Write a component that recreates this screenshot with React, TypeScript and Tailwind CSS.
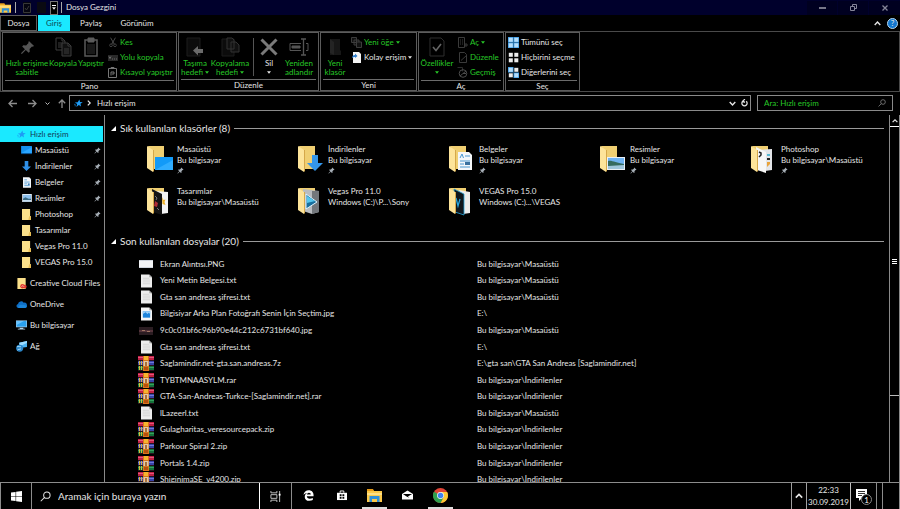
import type { ReactNode } from "react";

const GREEN = "text-[#27c927]";

const PinIcon = ({ className = "" }: { className?: string }) => (
  <svg viewBox="0 0 16 16" className={className} fill="currentColor" aria-hidden="true">
    <path d="M9.500 1l5.500 5.500-1.600.600-.600-.200-2.600 2.600.200 3-1.200 1.200-3-3L2 15l-1-1 4.300-4.200-3-3 1.200-1.200 3 .200L9.100 3.200 8.900 2.600z" />
  </svg>
);

const StarIcon = ({ className = "" }: { className?: string }) => (
  <svg viewBox="0 0 16 16" className={className} aria-hidden="true">
    <path d="M9.500 1l1.300 4.500 4.700.2-4 2.700 1 5.100-3.900-2.700-4.400 3.400 1.500-5.200L1.500 6l5.100-.3z" fill="#1e9bf5" />
    <path d="M0 9.500h3M1 12h2.500" stroke="#1e9bf5" strokeWidth="1" />
  </svg>
);

const Folder = ({ className = "" }: { className?: string }) => (
  <svg viewBox="0 0 10 12" className={className} aria-hidden="true">
    <path d="M0 0h9v8h1v4H0z" fill="#fbe08a" />
    <path d="M8 8h2v4H7z" fill="#e8bd55" />
  </svg>
);

const Monitor = () => (
  <svg viewBox="0 0 12 10" className="h-[9px] w-[11px]" aria-hidden="true">
    <path d="M0 0h12v8H0z" fill="#1491ee" />
    <path d="M0 8L12 1v7z" fill="#2ba6ff" />
    <path d="M0 8h12v1H0z" fill="#0b5fa8" />
  </svg>
);

const DownArrow = () => (
  <svg viewBox="0 0 10 12" className="h-[11px] w-[9px]" aria-hidden="true">
    <path d="M3 0h4v6h3l-5 5-5-5h3z" fill="#2f8fe6" />
  </svg>
);

const DocIcon = () => (
  <svg viewBox="0 0 9 12" className="h-[11px] w-2" aria-hidden="true">
    <path d="M0 0h7l2 2v10H0z" fill="#f2f6fa" />
    <path d="M1.500 3h3M1.500 5.500h6M1.500 7.500h3M1.500 9.500h6" stroke="#58a3da" strokeWidth="1" />
    <path d="M5.500 7h2v2h-2z" fill="#3d7fb8" />
  </svg>
);

const PictureIcon = () => (
  <svg viewBox="0 0 12 10" className="h-2 w-[10px]" aria-hidden="true">
    <path d="M0 0h12v10H0z" fill="#eef3f8" />
    <path d="M1 1h10v8H1z" fill="#8cc0ee" />
    <path d="M1 6l3-2 4 2 3 0v3H1z" fill="#3a6a83" />
    <path d="M1 7.500h10V9H1z" fill="#c3dcf0" />
  </svg>
);

const CreativeIcon = () => (
  <svg viewBox="0 0 10 12" className="h-[11px] w-[10px]" aria-hidden="true">
    <path d="M0 0h9v12H0z" fill="#fbe08a" />
    <circle cx="5.500" cy="9" r="2.400" fill="#e23a2e" />
    <circle cx="8" cy="9.400" r="2" fill="#e23a2e" />
    <path d="M4.500 9.500c.4-1.400 2-1.400 2.700 0" stroke="#fff" strokeWidth=".6" fill="none" />
  </svg>
);

const CloudIcon = () => (
  <svg viewBox="0 0 12 8" className="h-[7px] w-[11px]" aria-hidden="true">
    <path d="M2.500 8A2.400 2.400 0 0 1 2 3.300 3.600 3.600 0 0 1 8.500 2 3 3 0 0 1 10 8z" fill="#0f6fc6" />
    <path d="M2.500 8c-.8-2.200 2-4.700 4.200-3.300 2-1 5.300.6 5.100 2-.2.900-.8 1.300-1.800 1.300z" fill="#1b84d8" />
  </svg>
);

const ComputerIcon = () => (
  <svg viewBox="0 0 12 10" className="h-[10px] w-[11px]" aria-hidden="true">
    <path d="M0 0h12v7.500H0z" fill="#9ccbec" />
    <path d="M.7.700h10.600v6H.7z" fill="#2aa1ef" />
    <path d="M.7.700h8L.7 5z" fill="#68c4ff" />
    <path d="M4 8h4v1H4zM2 9h8v1H2z" fill="#b7d6ea" />
  </svg>
);

const NetworkIcon = () => (
  <svg viewBox="0 0 12 12" className="h-[11px] w-[11px]" aria-hidden="true">
    <path d="M3.500 2L12 0v6.500l-8 1z" fill="#49b1f1" />
    <path d="M3.500 2L12 0v2L4 6z" fill="#9bdbff" />
    <circle cx="4" cy="8" r="3.800" fill="#2a86c9" />
    <path d="M1 6.500c2-1.600 3 .6 4.500-.4M1.500 10c1-1.500 3-.4 4-1.700" stroke="#b8e6ff" fill="none" />
  </svg>
);

const Caret = () => (
  <svg viewBox="0 0 6 4" className="inline-block h-[3px] w-1 shrink-0" fill="currentColor" aria-hidden="true">
    <path d="M0 0h6L3 4z" />
  </svg>
);

const Chevron = ({ d, className = "" }: { d: string; className?: string }) => (
  <svg viewBox="0 0 10 10" className={className} fill="none" stroke="currentColor" strokeWidth="2" aria-hidden="true">
    <path d={d} />
  </svg>
);

const UP = "M1 7l4-4 4 4";
const DOWN = "M1 3l4 4 4-4";

/* ---------- ribbon ---------- */

function Group({ title, className, children }: { title: string; className: string; children: ReactNode }) {
  return (
    <section className={`flex shrink-0 flex-col border border-[#5c5c5c] px-[2px] ${className}`}>
      <div className="flex flex-1 pt-[2px]">{children}</div>
      <h2 className="h-[11px] border-t border-[#6b6b6b] text-center leading-[10px]">{title}</h2>
    </section>
  );
}

function BigButton({
  icon,
  lines,
  caret,
  className = "",
}: {
  icon: ReactNode;
  lines: string[];
  caret?: boolean;
  className?: string;
}) {
  return (
    <button className={`flex shrink-0 flex-col items-center leading-[9px] whitespace-nowrap ${className}`}>
      <span className="flex h-6 items-center justify-center text-[#555]">{icon}</span>
      {lines.map((line, index) => (
        <span key={line} className="flex items-center gap-[2px]">
          {line}
          {caret && index === lines.length - 1 && lines.length > 1 ? <Caret /> : null}
        </span>
      ))}
      {caret && lines.length === 1 ? (
        <span className="flex h-2 items-center">
          <Caret />
        </span>
      ) : null}
    </button>
  );
}

function SmallButton({ icon, label, caret, className = GREEN }: { icon: ReactNode; label: string; caret?: boolean; className?: string }) {
  return (
    <button className={`flex h-[15px] items-center gap-[2px] whitespace-nowrap ${className}`}>
      <span className="flex w-[11px] justify-center text-[#4d4d4d]">{icon}</span>
      {label}
      {caret ? <Caret /> : null}
    </button>
  );
}

const line = { fill: "none", stroke: "currentColor" };

const CopyGlyph = () => (
  <svg viewBox="0 0 17 20" className="h-5 w-[17px] text-[#3c3c3c]" {...line} aria-hidden="true">
    <path d="M1 1h6l3 3v9H1zM7 1v3h3M3 6h5M3 8h5M3 10h5" />
    <path d="M7 6h6l3 3v10H7zM13 6v3h3M9 12h5M9 14h5M9 16h5" fill="#111" />
  </svg>
);

const PasteGlyph = () => (
  <svg viewBox="0 0 14 20" className="h-5 w-[14px] text-[#5a5a5a]" {...line} aria-hidden="true">
    <path d="M1 3h12v16H1z" strokeWidth="1.500" />
    <path d="M4 1h6v4H4z" fill="currentColor" />
    <path d="M3 8h8M3 10h8M3 12h8M3 14h8M3 16h8" stroke="#333" />
  </svg>
);

const CutGlyph = () => (
  <svg viewBox="0 0 10 12" className="h-[11px] w-2" {...line} aria-hidden="true">
    <path d="M2 0l4.500 8M8 0L3.500 8" strokeWidth="1.200" />
    <circle cx="2.500" cy="9.500" r="1.700" />
    <circle cx="7.500" cy="9.500" r="1.700" />
  </svg>
);

const PathGlyph = () => (
  <svg viewBox="0 0 10 6" className="h-[6px] w-[10px]" aria-hidden="true">
    <path d="M0 0h10v6H0z" fill="#2a2a2a" />
    <path d="M1 1.500l1 2 1-2M4 4h1M6 4h1M8 4h1" stroke="#888" strokeWidth=".7" fill="none" />
  </svg>
);

const ShortcutGlyph = () => (
  <svg viewBox="0 0 9 11" className="h-[11px] w-[9px] text-[#777]" {...line} aria-hidden="true">
    <path d="M.5 1.500h8v9h-8zM3 .5h3v1H3z" />
    <path d="M3 8.500V5h3v2H4" />
  </svg>
);

const MoveGlyph = () => (
  <svg viewBox="0 0 18 20" className="h-5 w-[18px]" aria-hidden="true">
    <path d="M1 1h13v18H1z" fill="#0c0c0c" stroke="#1c1c1c" />
    <path d="M7 13.500l5-4.500v3h5v4h-5v2.500z" fill="#6a6a6a" />
  </svg>
);

const CopyToGlyph = () => (
  <svg viewBox="0 0 19 20" className="h-5 w-[19px] text-[#333]" {...line} aria-hidden="true">
    <path d="M1 2h12v17H1z" fill="#0c0c0c" stroke="#1c1c1c" />
    <path d="M6 1h5l2 2v9H6zM10 5h5l3 3v7h-8z" fill="#111" />
  </svg>
);

const CrossGlyph = () => (
  <svg viewBox="0 0 18 18" className="h-[18px] w-[18px] text-[#7a7a7a]" {...line} aria-hidden="true">
    <path d="M1.500 1.500l15 15M16.500 1.500l-15 15" strokeWidth="3" />
  </svg>
);

const RenameGlyph = () => (
  <svg viewBox="0 0 20 18" className="h-[18px] w-5 text-[#555]" {...line} aria-hidden="true">
    <path d="M12 5.500H1v7h11M17 5.500h2v7h-2" />
    <path d="M3 8h8v2H3z" fill="currentColor" />
    <path d="M14.500 1.500v15M12 1h5M12 17h5" strokeWidth="1.300" />
  </svg>
);

const NewFolderGlyph = () => (
  <svg viewBox="0 0 13 18" className="h-[18px] w-[13px]" aria-hidden="true">
    <path d="M1 1h10v11l1 1v4H1z" fill="#171717" />
    <path d="M1 1l4 3v13l-4-2z" fill="#242424" />
  </svg>
);

const NewItemGlyph = () => (
  <svg viewBox="0 0 11 11" className="h-[11px] w-[11px] text-[#3c3c3c]" {...line} aria-hidden="true">
    <path d="M.5.500h5v5h-5zM3 3h5v5H3z" fill="#111" />
    <path d="M5.500 5h5v5.500h-5z" fill="#111" />
  </svg>
);

const EasyAccessGlyph = () => (
  <svg viewBox="0 0 9 11" className="h-[11px] w-[9px]" aria-hidden="true">
    <path d="M1 0h6l2 2v9H1z" fill="#f4f4f4" />
    <path d="M0 6c.3-2 1-3 3-3V1.500L5.500 4 3 6V5C1.500 5 1 5.500 0 6z" fill="#2d7fd0" />
  </svg>
);

const PropertiesGlyph = () => (
  <svg viewBox="0 0 16 20" className="h-5 w-4 text-[#2e2e2e]" {...line} aria-hidden="true">
    <path d="M1 1h11l3 3v15H1z" />
    <path d="M4 10l3 3.500L12 7" stroke="#666" strokeWidth="1.600" />
  </svg>
);

const OpenGlyph = () => (
  <svg viewBox="0 0 10 11" className="h-[11px] w-[10px] text-[#3a3a3a]" {...line} aria-hidden="true">
    <path d="M.5.500h6v10h-6zM2 3h1M2 5h1M2 7h1M4 3h1M4 5h1M4 7h1M6 8h4M8 6v4" />
  </svg>
);

const EditGlyph = () => (
  <svg viewBox="0 0 10 11" className="h-[11px] w-[10px] text-[#3a3a3a]" {...line} aria-hidden="true">
    <path d="M1.500.500h5l2 2v8h-7zM3 8.500L9 3" />
  </svg>
);

const HistoryGlyph = () => (
  <svg viewBox="0 0 11 11" className="h-[11px] w-[11px] text-[#4c4c4c]" {...line} aria-hidden="true">
    <path d="M.5.500h5v4" stroke="#2c2c2c" />
    <circle cx="6" cy="6.500" r="3.800" />
    <path d="M3 9l6-5M6 6.500h3" />
  </svg>
);

function SelectGlyph({ on }: { on: number[] }) {
  return (
    <svg viewBox="0 0 11 11" className="h-[11px] w-[11px]" aria-hidden="true">
      {[0, 1, 2, 3].map((i) => {
        const x = (i % 2) * 5.5;
        const y = Math.floor(i / 2) * 5.5;
        return on.includes(i) ? (
          <g key={i}>
            <rect x={x} y={y} width="5.500" height="5.500" fill="#3f9ee8" />
            <rect x={x + 0.8} y={y + 0.8} width="4" height="4" fill="#b5dcf8" />
          </g>
        ) : (
          <rect key={i} x={x + 0.8} y={y + 0.8} width="4" height="4" fill="#ececec" />
        );
      })}
    </svg>
  );
}

function Ribbon() {
  return (
    <div className="flex h-[61px] shrink-0 gap-px border border-[#4a4a4a] pl-px">
      <Group title="Pano" className="w-[175px]">
        <BigButton className={`w-11 ${GREEN}`} lines={["Hızlı erişime", "sabitle"]} icon={<PinIcon className="h-[15px] w-[15px]" />} />
        <BigButton className={`w-7 ${GREEN}`} lines={["Kopyala"]} icon={<CopyGlyph />} />
        <BigButton className={`w-7 ${GREEN}`} lines={["Yapıştır"]} icon={<PasteGlyph />} />
        <div className="ml-[2px]">
          <SmallButton icon={<CutGlyph />} label="Kes" />
          <SmallButton icon={<PathGlyph />} label="Yolu kopyala" />
          <SmallButton icon={<ShortcutGlyph />} label="Kısayol yapıştır" />
        </div>
      </Group>
      <Group title="Düzenle" className="w-[141px]">
        <BigButton className={`w-7 ${GREEN}`} lines={["Taşıma", "hedefi"]} caret icon={<MoveGlyph />} />
        <BigButton className={`w-[42px] ${GREEN}`} lines={["Kopyalama", "hedefi"]} caret icon={<CopyToGlyph />} />
        <div className="my-[3px] ml-[2px] w-px bg-[#555]" />
        <BigButton className="w-[30px]" lines={["Sil"]} caret icon={<CrossGlyph />} />
        <BigButton className={`w-[30px] ${GREEN}`} lines={["Yeniden", "adlandır"]} icon={<RenameGlyph />} />
      </Group>
      <Group title="Yeni" className="w-[97px]">
        <BigButton className={`w-6 ${GREEN}`} lines={["Yeni", "klasör"]} icon={<NewFolderGlyph />} />
        <div className="ml-1">
          <SmallButton icon={<NewItemGlyph />} label="Yeni öğe" caret />
          <SmallButton icon={<EasyAccessGlyph />} label="Kolay erişim" caret className="" />
        </div>
      </Group>
      <Group title="Aç" className="w-[86px]">
        <BigButton className={`w-8 ${GREEN}`} lines={["Özellikler"]} caret icon={<PropertiesGlyph />} />
        <div className="ml-1">
          <SmallButton icon={<OpenGlyph />} label="Aç" caret />
          <SmallButton icon={<EditGlyph />} label="Düzenle" />
          <SmallButton icon={<HistoryGlyph />} label="Geçmiş" />
        </div>
      </Group>
      <Group title="Seç" className="w-[75px]">
        <div>
          <SmallButton icon={<SelectGlyph on={[0, 1, 2, 3]} />} label="Tümünü seç" className="" />
          <SmallButton icon={<SelectGlyph on={[]} />} label="Hiçbirini seçme" className="" />
          <SmallButton icon={<SelectGlyph on={[0, 3]} />} label="Diğerlerini seç" className="" />
        </div>
      </Group>
    </div>
  );
}

/* ---------- sidebar ---------- */

const pinned = [
  { label: "Masaüstü", icon: <Monitor />, pin: true },
  { label: "İndirilenler", icon: <DownArrow />, pin: true },
  { label: "Belgeler", icon: <DocIcon />, pin: true },
  { label: "Resimler", icon: <PictureIcon />, pin: true },
  { label: "Photoshop", icon: <Folder className="h-[11px] w-[9px]" />, pin: true },
  { label: "Tasarımlar", icon: <Folder className="h-[11px] w-[9px]" />, pin: false },
  { label: "Vegas Pro 11.0", icon: <Folder className="h-[11px] w-[9px]" />, pin: false },
  { label: "VEGAS Pro 15.0", icon: <Folder className="h-[11px] w-[9px]" />, pin: false },
];

const roots = [
  { label: "Creative Cloud Files", icon: <CreativeIcon /> },
  { label: "OneDrive", icon: <CloudIcon /> },
  { label: "Bu bilgisayar", icon: <ComputerIcon /> },
  { label: "Ağ", icon: <NetworkIcon /> },
];

function Sidebar() {
  return (
    <nav className="w-[105px] shrink-0 border-r border-[#8a8a8a] pt-[11px] whitespace-nowrap">
      <a href="#hizli" className="mr-px flex h-4 items-center gap-1 bg-[#1ae9ff] pl-[17px] text-[#123a55]">
        <StarIcon className="h-[9px] w-[9px]" />
        Hızlı erişim
      </a>
      {pinned.map((item) => (
        <a key={item.label} href="#klasor" className="flex h-4 items-center gap-[2px] pr-[3px] pl-5">
          <span className="flex w-[13px] justify-center">{item.icon}</span>
          <span className="flex-1">{item.label}</span>
          {item.pin ? <PinIcon className="h-[7px] w-[7px] text-[#a5adb5]" /> : null}
        </a>
      ))}
      <div className="flex flex-col gap-[5px] pt-[5px]">
        {roots.map((item) => (
          <a key={item.label} href="#kok" className="flex h-4 items-center gap-[2px] pl-[15px]">
            <span className="flex w-[13px] justify-center">{item.icon}</span>
            {item.label}
          </a>
        ))}
      </div>
    </nav>
  );
}

/* ---------- folder tiles ---------- */

function BigFolder({ children }: { children: ReactNode }) {
  return (
    <svg viewBox="0 0 27 30" className="h-[30px] w-[27px] shrink-0" aria-hidden="true">
      <path d="M1 2h16v23H7z" fill="#f0cf72" />
      {children}
      <path d="M0 2l6 4v22l-6-4z" fill="#fde49a" />
      <path d="M6 6v22l1-1V6z" fill="#d5a84a" />
    </svg>
  );
}

const tiles = [
  {
    name: "Masaüstü",
    path: "Bu bilgisayar",
    pin: true,
    art: (
      <>
        <path d="M8 13h18v13H8z" fill="#129af8" />
        <path d="M8 26L26 16v10z" fill="#30adff" />
      </>
    ),
  },
  { name: "İndirilenler", path: "Bu bilgisayar", pin: true, art: <path d="M14 11h6v8h5l-8 8-8-8h5z" fill="#3496ea" /> },
  {
    name: "Belgeler",
    path: "Bu bilgisayar",
    pin: true,
    art: (
      <>
        <path d="M9 8h11l3 3v15H9z" fill="#f4f7fa" />
        <path d="M11 14l2-4 1.500 4M16 12h5M11 17h10M11 20h4M11 23h10" stroke="#4a98d0" fill="none" />
        <path d="M16 18h5v3h-5z" fill="#3a719f" />
      </>
    ),
  },
  {
    name: "Resimler",
    path: "Bu bilgisayar",
    pin: true,
    art: (
      <>
        <path d="M7 13h18v13H7z" fill="#eaf0f6" />
        <path d="M8 14h16v11H8z" fill="#6fb3f2" />
        <path d="M8 17c4-1 8 2 16 3v2H8z" fill="#356b5f" />
        <path d="M8 22l16-1v4H8z" fill="#9fc6dc" />
      </>
    ),
  },
  {
    name: "Photoshop",
    path: "Bu bilgisayar\\Masaüstü",
    pin: true,
    art: (
      <>
        <path d="M8 6l13-1v21l-7 1z" fill="#e3e5e8" />
        <path d="M5 3l10 5v21l-9-3z" fill="#f7f7f7" />
        <path d="M8 8l2 1v2l-2 2" stroke="#222" strokeWidth="1.500" fill="none" />
        <path d="M16 14h3v2h-3z" fill="#222" />
        <path d="M16 10h3v2h-3z" fill="#58b9d3" />
        <path d="M16 18h3v2l-3 3z" fill="#e9a33b" />
      </>
    ),
  },
  {
    name: "Tasarımlar",
    path: "Bu bilgisayar\\Masaüstü",
    art: (
      <>
        <path d="M8 5l13 1v21l-7 1z" fill="#f4f4f4" />
        <path d="M15 11l1.500 3 2-.5-1 2.500 1 3-3-1z" fill="#edb22c" />
        <path d="M5 3l10 5v21l-9-3z" fill="#141414" />
        <path d="M8 15l3 2-1 4-3-1z" fill="#b02c35" />
        <path d="M8 10l2 2-1 2M10 22l2 2" stroke="#777" fill="none" />
      </>
    ),
  },
  {
    name: "Vegas Pro 11.0",
    path: "Windows (C:)\\P...\\Sony",
    art: (
      <>
        <path d="M5 3l16 2v21l-7 2-9-3z" fill="#b9bcc0" />
        <path d="M14 5l7 0v21l-7 2z" fill="#73777c" />
        <path d="M8 8l11 8-11 7z" fill="#176f9e" stroke="#dff4ff" />
        <path d="M9 10l8 5-8 2z" fill="#55c6ee" />
      </>
    ),
  },
  {
    name: "VEGAS Pro 15.0",
    path: "Windows (C:)...\\VEGAS",
    art: (
      <>
        <path d="M10 4l11 2v21l-7 1z" fill="#ececec" />
        <path d="M5 3l10 5v21l-9-3z" fill="#10171d" stroke="#2aa6dc" strokeWidth=".8" />
        <path d="M7 12l2 8 2-7" stroke="#2aa6dc" strokeWidth="1.300" fill="none" />
      </>
    ),
  },
];

function SectionTitle({ children }: { children: ReactNode }) {
  return (
    <h2 className="flex h-4 items-center gap-1 pl-[6px] text-[10px] whitespace-nowrap">
      <svg viewBox="0 0 5 5" className="h-[5px] w-[5px]" fill="#fff" aria-hidden="true">
        <path d="M5 0v5H0z" />
      </svg>
      {children}
      <span className="mr-[5px] h-px flex-1 bg-[#9a9a9a]" />
    </h2>
  );
}

/* ---------- recent files ---------- */

const TxtIcon = () => (
  <svg viewBox="0 0 12 14" className="h-[14px] w-[11px]" aria-hidden="true">
    <path d="M0 0h9l3 3v11H0z" fill="#ededed" />
    <path d="M9 0v3h3z" fill="#a9a9a9" />
    <path d="M2 4h7M2 6h8M2 8h8M2 10h8" stroke="#d2d2d2" />
  </svg>
);

const JpgIcon = () => (
  <svg viewBox="0 0 12 14" className="h-[14px] w-[11px]" aria-hidden="true">
    <path d="M0 0h9l3 3v11H0z" fill="#f5f5f5" />
    <path d="M9 0v3h3z" fill="#a9a9a9" />
    <path d="M2 4h8v7H2z" fill="#1d84dc" />
    <path d="M2 7V4h8v3L8.500 5.500 7 7 5 5z" fill="#9fd0f7" />
  </svg>
);

const PngIcon = () => (
  <svg viewBox="0 0 14 8" className="h-2 w-[14px]" aria-hidden="true">
    <path d="M0 0h14v8H0z" fill="#f3f4f6" />
    <path d="M0 0h14v1H0zM0 7h14v1H0z" fill="#cfd4dc" />
  </svg>
);

const PhotoIcon = () => (
  <svg viewBox="0 0 14 8" className="h-2 w-[14px]" aria-hidden="true">
    <path d="M0 0h14v8H0z" fill="#2b1d22" />
    <path d="M0 3h14v2H0z" fill="#53333a" />
    <path d="M3 3h3v1H3zM8 4h3v1H8z" fill="#a07563" />
  </svg>
);

const RarIcon = () => (
  <svg viewBox="0 0 16 15" className="h-[15px] w-4" aria-hidden="true">
    <path d="M0 0h16v5H0z" fill="#c01f45" />
    <path d="M0 1h16v1H0z" fill="#e4577a" />
    <path d="M0 5h16v5H0z" fill="#3a43a8" />
    <path d="M0 6h16v1H0z" fill="#6f7bd8" />
    <path d="M0 10h16v5H0z" fill="#15713a" />
    <path d="M0 11h16v1H0z" fill="#35a35c" />
    <path d="M0 4h16v1H0zM0 9h16v1H0zM0 14h16v1H0z" fill="#2a1420" />
    <path d="M1 5h1v4H1zM3 5h1v4H3zM1 10h1v4H1zM3 10h1v4H3z" fill="#d9b53c" />
    <path d="M5 0h6v15H5z" fill="#d9761c" />
    <path d="M6 0h4v4H6z" fill="#f6b42e" />
    <path d="M5.500 5h5v5h-5z" fill="#e0c9a8" />
    <path d="M7 6h2v4H7z" fill="#a8703a" />
    <path d="M6 11h4v3H6z" fill="#b6500f" />
  </svg>
);

const DESKTOP = "Bu bilgisayar\\Masaüstü";
const DOWNLOADS = "Bu bilgisayar\\İndirilenler";

const files = [
  { name: "Ekran Alıntısı.PNG", path: DESKTOP, icon: <PngIcon /> },
  { name: "Yeni Metin Belgesi.txt", path: DESKTOP, icon: <TxtIcon /> },
  { name: "Gta san andreas şifresi.txt", path: DESKTOP, icon: <TxtIcon /> },
  { name: "Bilgisiyar Arka Plan Fotoğrafı Senin İçin Seçtim.jpg", path: "E:\\", icon: <JpgIcon /> },
  { name: "9c0c01bf6c96b90e44c212c6731bf640.jpg", path: DESKTOP, icon: <PhotoIcon /> },
  { name: "Gta san andreas şifresi.txt", path: "E:\\", icon: <TxtIcon /> },
  { name: "Saglamindir.net-gta.san.andreas.7z", path: "E:\\gta san\\GTA San Andreas [Saglamindir.net]", icon: <RarIcon /> },
  { name: "TYBTMNAASYLM.rar", path: DOWNLOADS, icon: <RarIcon /> },
  { name: "GTA-San-Andreas-Turkce-[Saglamindir.net].rar", path: DOWNLOADS, icon: <RarIcon /> },
  { name: "lLazeerl.txt", path: DESKTOP, icon: <TxtIcon /> },
  { name: "Gulagharitas_veresourcepack.zip", path: DOWNLOADS, icon: <RarIcon /> },
  { name: "Parkour Spiral 2.zip", path: DOWNLOADS, icon: <RarIcon /> },
  { name: "Portals 1.4.zip", path: DOWNLOADS, icon: <RarIcon /> },
  { name: "ShiginimaSE_v4200.zip", path: DOWNLOADS, icon: <RarIcon /> },
];

function Content() {
  return (
    <main className="min-w-0 flex-1 overflow-hidden pt-[5px]">
      <SectionTitle>Sık kullanılan klasörler (8)</SectionTitle>
      <div className="grid grid-cols-[repeat(auto-fill,115px)] gap-x-9 pt-2 pl-[42px]">
        {tiles.map((tile) => (
          <a key={tile.name} href="#tile" className="flex h-[42px] gap-[3px] whitespace-nowrap">
            <BigFolder>{tile.art}</BigFolder>
            <span className="leading-[11px]">
              {tile.name}
              <br />
              {tile.path}
              {tile.pin ? <PinIcon className="mt-px h-[7px] w-[7px] text-[#a5adb5]" /> : null}
            </span>
          </a>
        ))}
      </div>
      <div className="pt-[5px]">
        <SectionTitle>Son kullanılan dosyalar (20)</SectionTitle>
      </div>
      {/* row heights are shared out over the table */}
      <table className="mt-[7px] h-[232px] w-full table-fixed whitespace-nowrap">
        <tbody>
          {files.map((file, index) => (
            <tr key={index}>
              <td className="w-[55px] p-0 pl-[33px]">
                <span className="flex h-[15px] w-4 items-center justify-center">{file.icon}</span>
              </td>
              <td className="w-[317px] p-0">{file.name}</td>
              <td className="p-0">{file.path}</td>
            </tr>
          ))}
        </tbody>
      </table>
    </main>
  );
}

function Scrollbar() {
  return (
    <div className="flex w-[11px] shrink-0 flex-col border-x border-[#8a8a8a]">
      <button aria-label="Yukarı kaydır" className="flex h-3 items-center justify-center border-b border-white">
        <Chevron d={UP} className="h-[6px] w-[6px]" />
      </button>
      <div className="flex flex-[270] flex-col items-center justify-center gap-px border-b border-[#bbb]">
        <span className="h-px w-[5px] bg-white" />
        <span className="h-px w-[5px] bg-white" />
        <span className="h-px w-[5px] bg-white" />
      </div>
      <div className="flex-[86]" />
    </div>
  );
}

/* ---------- taskbar ---------- */

const ExplorerIcon = ({ className }: { className: string }) => (
  <svg viewBox="0 0 15 13" className={className} aria-hidden="true">
    <path d="M0 1h6l1 1h8v11H0z" fill="#fbc94a" />
    <path d="M0 0h6l1 2H0z" fill="#e59a17" />
    <path d="M2.500 7h10v6H10v-3H5v3H2.500z" fill="#2f8fd8" />
    <path d="M0 4h15v2H0z" fill="#ffdf85" />
  </svg>
);

const EdgeIcon = () => (
  <svg viewBox="0 0 12 12" className="h-[11px] w-[11px]" fill="#fff" aria-hidden="true">
    <path d="M.5 5.500C1 2 3.300.300 6.200.300c3.600 0 5.300 2.500 5.300 5.200v1.400H4.200c0 1.700 1.300 2.600 3.200 2.600 1.300 0 2.400-.4 3.300-.9v2.300c-1 .6-2.400.9-4 .9C3.700 11.800 1.900 10 1.900 7.500c0-2 1-3.500 2.600-4.300C2.700 3.300 1.300 4.200.5 5.500zM4.300 5h4.200c0-1.300-.6-2.100-2-2.100-1.200 0-2 .9-2.200 2.100z" />
  </svg>
);

const StoreIcon = () => (
  <svg viewBox="0 0 11 12" className="h-[11px] w-[10px]" aria-hidden="true">
    <path d="M3.500 3V1h4v2" stroke="#fff" fill="none" />
    <path d="M0 3h11v8H0z" fill="#fff" />
    <path d="M3 4.500h2v2H3zM6 4.500h2v2H6zM3 7.500h2v2H3zM6 7.500h2v2H6z" fill="#000" />
  </svg>
);

const MailIcon = () => (
  <svg viewBox="0 0 12 10" className="h-[10px] w-[11px]" aria-hidden="true">
    <path d="M0 4l6-4 6 4v6H0z" fill="#fff" />
    <path d="M1 4h10L6.500 6.500 8 8 5 6.500z" fill="#000" />
  </svg>
);

const ChromeIcon = () => (
  <svg viewBox="0 0 48 48" className="h-[15px] w-[15px]" aria-hidden="true">
    <circle cx="24" cy="24" r="24" fill="#e24436" />
    <path d="M24 24L3.200 12A24 24 0 0 0 24 48z" fill="#2ea04f" />
    <path d="M24 48l9.500-18.500L24 13h21.300A24 24 0 0 1 24 48z" fill="#fcc934" />
    <path d="M3.200 12l11.300 17.500L24 48l9.500-18.500H24z" fill="#2ea04f" />
    <circle cx="24" cy="24" r="11" fill="#f4f4f4" />
    <circle cx="24" cy="24" r="8.800" fill="#3f83f0" />
  </svg>
);

const Magnifier = ({ className }: { className: string }) => (
  <svg viewBox="0 0 12 12" className={className} fill="none" stroke="currentColor" strokeWidth="1.100" aria-hidden="true">
    <circle cx="7.500" cy="4.500" r="3.500" />
    <path d="M5 7L.8 11.200" />
  </svg>
);

const apps = [
  { label: "Edge", icon: <EdgeIcon />, open: false },
  { label: "Store", icon: <StoreIcon />, open: false },
  { label: "Dosya Gezgini", icon: <ExplorerIcon className="h-[13px] w-[15px]" />, open: true },
  { label: "Posta", icon: <MailIcon />, open: false },
  { label: "Chrome", icon: <ChromeIcon />, open: true },
];

function Taskbar() {
  return (
    <footer className="flex h-[27px] shrink-0 border-t border-[#8c8c8c]">
      <button aria-label="Başlat" className="flex w-8 items-center justify-center border-x border-[#8c8c8c]">
        <svg viewBox="0 0 12 12" className="h-[11px] w-[11px]" fill="#fff" aria-hidden="true">
          <path d="M0 1.700l5-.7v4.700H0zM5.600.900L12 0v5.700H5.600zM0 6.300h5V11l-5-.7zM5.600 6.300H12V12l-6.400-.9z" />
        </svg>
      </button>
      <label className="flex w-[228px] items-center gap-[7px] border-r border-white pl-2">
        <Magnifier className="h-[11px] w-[11px]" />
        <input
          aria-label="Ara"
          placeholder="Aramak için buraya yazın"
          className="min-w-0 flex-1 bg-transparent text-[10px] outline-none placeholder:text-[#e6e6e6]"
        />
      </label>
      <button aria-label="Görev görünümü" className="flex w-8 items-center justify-center border-r border-[#8c8c8c]">
        <svg viewBox="0 0 12 12" className="h-[11px] w-[11px]" fill="none" stroke="#ccc" aria-hidden="true">
          <path d="M1 0v2h6.500V0M1 4h6.500v4H1zM1 12v-2h6.500v2M10.500 0v12" />
          <path d="M9.500 3h2v2h-2z" fill="#fff" stroke="none" />
        </svg>
      </button>
      <div className="flex flex-1 gap-2 pl-1">
        {apps.map((app) => (
          <button
            key={app.label}
            aria-label={app.label}
            className={`flex w-[25px] items-center justify-center border-b-2 ${app.open ? "border-[#ddd]" : "border-transparent"}`}
          >
            {app.icon}
          </button>
        ))}
      </div>
      <button aria-label="Gizli simgeler" className="flex w-4 items-center justify-center border-x border-[#a0a0a0]">
        <Chevron d={UP} className="h-2 w-2" />
      </button>
      <button className="w-11 border-r border-[#c0c0c0] leading-3">
        22:33
        <br />
        30.09.2019
      </button>
      <button aria-label="Bildirimler" className="flex w-[26px] items-center justify-center border-r border-[#8c8c8c]">
        <svg viewBox="0 0 17 17" className="h-[17px] w-[17px]" aria-hidden="true">
          <path d="M1 1h11v9H7l-3 3v-3H1z" fill="#fff" />
          <path d="M3 3.500h7M3 5.500h7M3 7.500h4" stroke="#333" />
          <circle cx="11.500" cy="11.500" r="5" fill="#000" stroke="#888" />
          <text x="11.500" y="14.500" textAnchor="middle" fill="#fff" fontSize="8">
            1
          </text>
        </svg>
      </button>
      <div className="w-[6px] border-r border-[#8c8c8c]" />
      <button aria-label="Masaüstünü göster" className="w-[17px] border-r border-[#8c8c8c]" />
    </footer>
  );
}

/* ---------- window ---------- */

function TitleBar() {
  return (
    <header className="flex h-[15px] shrink-0 items-center bg-[#00002c]">
      <ExplorerIcon className="h-[10px] w-[11px]" />
      <span className="ml-1 h-[11px] w-px bg-[#aaa]" />
      <button aria-label="Özellikler" className="ml-[7px] flex h-3 w-2 items-center bg-[#050510] text-[#383838]">
        <svg viewBox="0 0 8 10" className="h-[10px] w-2" {...line} aria-hidden="true">
          <path d="M.5.500h7v9h-7zM2 5l1.500 2L6 3" />
        </svg>
      </button>
      <button aria-label="Yeni klasör" className="ml-[6px] h-[11px] w-[9px] bg-[#0a0a12]" />
      <button
        aria-label="Hızlı erişim araç çubuğu"
        className="ml-1 flex h-[14px] w-2 flex-col items-center justify-center gap-px border border-[#777] bg-black"
      >
        <span className="h-px w-1 bg-white" />
        <Caret />
      </button>
      <span className="ml-[3px] h-[11px] w-px bg-[#aaa]" />
      <h1 className="ml-1 flex-1">Dosya Gezgini</h1>
      <div className="flex h-[14px] gap-px text-[#858598]">
        <button aria-label="Simge durumuna küçült" className="flex w-[30px] items-center justify-center bg-[#000020]">
          <span className="h-[2px] w-[7px] bg-[#777788]" />
        </button>
        <button aria-label="Geri yükle" className="flex w-[30px] items-center justify-center bg-[#000020]">
          <svg viewBox="0 0 7 7" className="h-[7px] w-[7px]" {...line} aria-hidden="true">
            <path d="M.5 2.500h4v4h-4zM2.500 2V.500h4v4H5" />
          </svg>
        </button>
        <button aria-label="Kapat" className="flex w-[31px] items-center justify-center bg-[#000020]">
          <svg viewBox="0 0 6 6" className="h-[6px] w-[6px]" {...line} strokeWidth="1.300" aria-hidden="true">
            <path d="M.5.500l5 5M5.500.500l-5 5" />
          </svg>
        </button>
      </div>
    </header>
  );
}

function Tabs() {
  return (
    <div className="flex h-4 shrink-0 items-center">
      <button className="h-full w-[37px] border border-[#5c5c5c]">Dosya</button>
      <button className="ml-px h-full w-8 bg-[#1ae9ff] text-[#0c4a55]">Giriş</button>
      <button className="h-full w-[42px]">Paylaş</button>
      <button className="h-full w-[50px]">Görünüm</button>
      <span className="flex-1" />
      <button aria-label="Şeridi daralt">
        <Chevron d={UP} className="h-[7px] w-[7px]" />
      </button>
      <button
        aria-label="Yardım"
        className="mr-[2px] ml-[6px] flex h-[11px] w-[11px] items-center justify-center rounded-full border border-[#b8d8f0] bg-[#1377d0] leading-none"
      >
        ?
      </button>
    </div>
  );
}

function AddressBar() {
  return (
    <div className="flex h-[23px] shrink-0 items-start pt-[3px] pr-[7px]">
      <div className="flex h-4 w-[69px] items-center pl-2 text-[#8d8d8d]">
        <button aria-label="Geri">
          <svg viewBox="0 0 9 9" className="h-[9px] w-[9px]" {...line} strokeWidth="1.300" aria-hidden="true">
            <path d="M9 4.500H1M4.500 1L1 4.500 4.500 8" />
          </svg>
        </button>
        <button aria-label="İleri" className="ml-[11px]">
          <svg viewBox="0 0 9 9" className="h-[9px] w-[9px]" {...line} strokeWidth="1.300" aria-hidden="true">
            <path d="M0 4.500h8M4.500 1L8 4.500 4.500 8" />
          </svg>
        </button>
        <button aria-label="Son konumlar" className="ml-2 text-[#bbb]">
          <Chevron d={DOWN} className="h-[5px] w-[5px]" />
        </button>
        <button aria-label="Yukarı" className="ml-2">
          <svg viewBox="0 0 8 9" className="h-[9px] w-2" {...line} strokeWidth="1.300" aria-hidden="true">
            <path d="M4 9V1M.8 4.200L4 1l3.200 3.200" />
          </svg>
        </button>
      </div>
      <div className="flex h-4 flex-1 items-center border border-[#8a8a8a] pr-[2px] pl-1">
        <StarIcon className="h-[9px] w-[9px]" />
        <Chevron d="M3 1l4 4-4 4" className="ml-[3px] h-[6px] w-[6px]" />
        <a href="#hizli" className="ml-[5px] flex-1">
          Hızlı erişim
        </a>
        <button aria-label="Önceki konumlar">
          <Chevron d={DOWN} className="h-[7px] w-[7px]" />
        </button>
        <button aria-label="Yenile" className="ml-[5px]">
          <svg viewBox="0 0 8 9" className="h-2 w-[7px]" {...line} strokeWidth="1.400" aria-hidden="true">
            <path d="M6 2.500a3 3 0 1 1-4 0M4.500 0L2 2.300l2.500 1.500" />
          </svg>
        </button>
      </div>
      <label className="ml-[6px] flex h-4 w-[136px] items-center border border-[#8a8a8a] pr-[6px] pl-[6px] text-[#8d8d8d]">
        <input
          aria-label="Ara"
          placeholder="Ara: Hızlı erişim"
          className="min-w-0 flex-1 bg-transparent outline-none placeholder:text-[#27c927]"
        />
        <Magnifier className="h-2 w-2" />
      </label>
    </div>
  );
}

export default function App() {
  return (
    <div className="flex h-screen flex-col overflow-hidden bg-black font-['Lato','Open_Sans',sans-serif] text-[8px] leading-[11px] text-[#e6e6e6]">
      <TitleBar />
      <Tabs />
      <Ribbon />
      <AddressBar />
      <div className="flex min-h-0 flex-1">
        <Sidebar />
        <Content />
        <Scrollbar />
      </div>
      <Taskbar />
    </div>
  );
}
